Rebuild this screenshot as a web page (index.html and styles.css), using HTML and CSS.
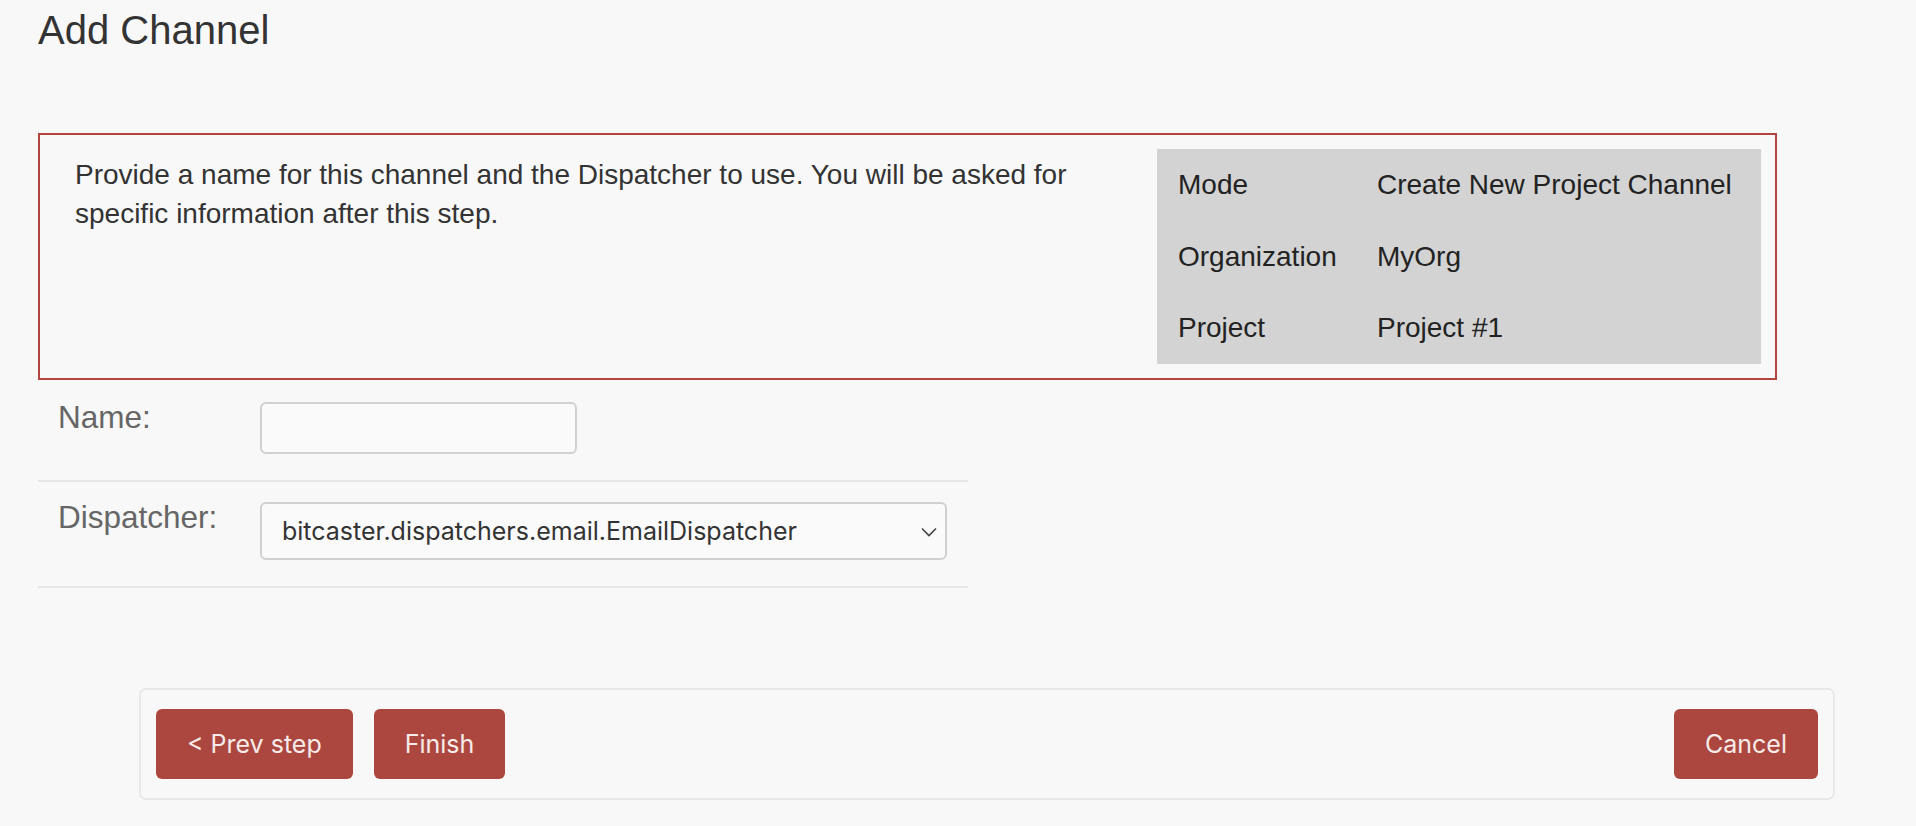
FILE: index.html
```html
<!DOCTYPE html>
<html lang="en">
<head>
<meta charset="utf-8">
<title>Add Channel</title>
<link rel="stylesheet" href="styles.css">
</head>
<body>
<div class="page">
  <h1 class="title">Add Channel</h1>
  <div class="info">
    <div class="info-text">
      <p>Provide a name for this channel and the Dispatcher to use. You will be asked for specific information after this step.</p>
    </div>
    <table class="meta">
      <tr><td class="k">Mode</td><td class="v">Create New Project Channel</td></tr>
      <tr><td class="k">Organization</td><td class="v">MyOrg</td></tr>
      <tr><td class="k">Project</td><td class="v">Project #1</td></tr>
    </table>
  </div>
  <form class="form">
    <div class="row">
      <label class="lbl" for="name">Name:</label>
      <input class="name-input" id="name" type="text">
    </div>
    <div class="row">
      <label class="lbl" for="disp">Dispatcher:</label>
      <div class="select-wrap">
        <select class="select" id="disp">
          <option>bitcaster.dispatchers.email.EmailDispatcher</option>
        </select>
        <svg class="chev" width="16" height="10" viewBox="0 0 16 10"><polyline points="1,1.5 8,8.5 15,1.5" fill="none" stroke="#444" stroke-width="1.6"/></svg>
      </div>
    </div>
  </form>
  <div class="actions">
    <div class="group">
      <button class="btn" type="button">&lt; Prev step</button>
      <button class="btn" type="button">Finish</button>
    </div>
    <button class="btn" type="button">Cancel</button>
  </div>
</div>
</body>
</html>
```
FILE: styles.css
```css
html, body {
  margin: 0;
  background: #f8f8f8;
  font-family: "Liberation Sans", Arial, sans-serif;
}
.page {
  padding: 7px 0 0 38px;
}
.title {
  margin: 0;
  font-size: 40px;
  line-height: 46px;
  font-weight: normal;
  color: #333;
}
.info {
  margin-top: 80px;
  width: 1739px;
  box-sizing: border-box;
  border: 2px solid #b0463f;
  padding: 14px;
  display: flex;
  justify-content: space-between;
}
.info-text {
  flex: 1;
  padding: 6px 0 0 21px;
}
.info-text p {
  margin: 0;
  font-size: 28px;
  line-height: 39px;
  color: #333;
}
.meta {
  flex: 0 0 604px;
  width: 604px;
  table-layout: fixed;
  background: #d3d3d3;
  border-collapse: collapse;
  font-size: 28px;
  color: #222;
}
.meta td {
  padding: 20px 21px;
  line-height: 31.7px;
  white-space: nowrap;
}
.meta td.k {
  width: 157px;
}
.meta td.v {
  padding-right: 29px;
}
.form {
  width: 930px;
  margin-top: 2px;
}
.row {
  display: flex;
  align-items: flex-start;
  padding: 20px 0 26px;
  border-bottom: 2px solid #e6e6e6;
}
.lbl {
  width: 202px;
  padding-left: 20px;
  font-size: 31.5px;
  line-height: 30px;
  color: #666;
}
.name-input {
  width: 317px;
  height: 52px;
  box-sizing: border-box;
  border: 2px solid #d0d0d0;
  border-radius: 6px;
  background: #fafafa;
  margin: 0;
}
.select-wrap {
  position: relative;
  width: 687px;
  height: 58px;
}
.select {
  appearance: none;
  -webkit-appearance: none;
  width: 100%;
  height: 100%;
  box-sizing: border-box;
  border: 2px solid #d0d0d0;
  border-radius: 6px;
  background: #fafafa;
  padding: 0 40px 0 20px;
  font-family: Inter, "Noto Sans", sans-serif;
  font-size: 25px;
  color: #333;
  margin: 0;
}
.chev {
  position: absolute;
  right: 10px;
  top: 25px;
}
.actions {
  margin-top: 100px;
  margin-left: 101px;
  width: 1696px;
  box-sizing: border-box;
  border: 2px solid #e8e8e8;
  border-radius: 7px;
  padding: 19px 15px 19px;
  display: flex;
  justify-content: space-between;
}
.group {
  display: flex;
  gap: 21px;
}
.btn {
  height: 70px;
  padding: 0 31px;
  border: none;
  border-radius: 6px;
  background: #ab473f;
  color: #f7ebe9;
  font-family: Inter, "Noto Sans", sans-serif;
  font-size: 25px;
}
```
